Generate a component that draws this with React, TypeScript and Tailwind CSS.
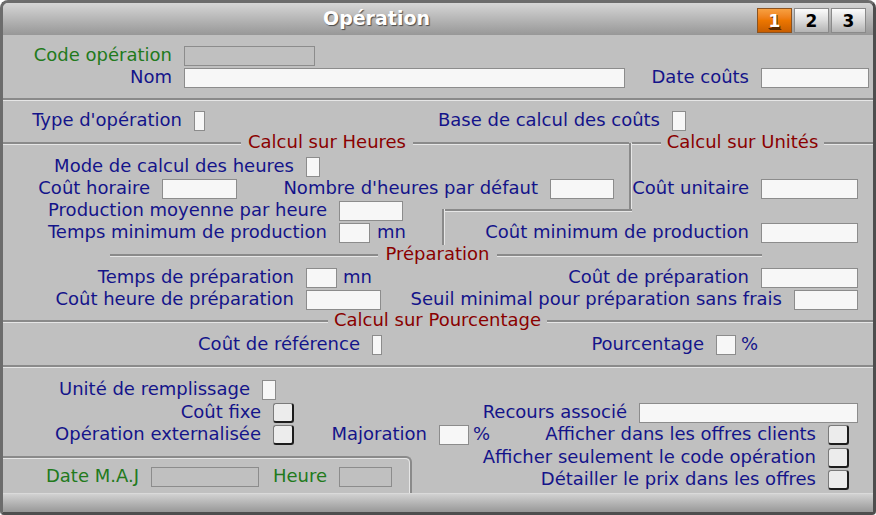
import type { ReactNode } from "react";

const NAVY = "text-[#14148a]";
const GREEN = "text-[#227a1c]";
const MAROON = "text-[#8a0000]";

function Groove({ className = "" }: { className?: string }) {
  return (
    <div
      className={`h-[3px] shrink-0 border-t-2 border-b border-t-[#8a8a8a] border-b-[#e6e6e6] ${className}`}
    />
  );
}

function L({
  className,
  children,
  green,
}: {
  className: string;
  children: ReactNode;
  green?: boolean;
}) {
  return (
    <span
      className={`shrink-0 whitespace-nowrap pb-[2px] text-right leading-[20px] ${green ? GREEN : NAVY} ${className}`}
    >
      {children}
    </span>
  );
}

function Caption({ className, children }: { className: string; children: ReactNode }) {
  return (
    <span className={`shrink-0 pb-[2px] text-center leading-[20px] ${MAROON} ${className}`}>
      {children}
    </span>
  );
}

function Box({ className, disabled }: { className: string; disabled?: boolean }) {
  return (
    <div
      className={`h-[20px] shrink-0 border border-[#8c8c8c] ${
        disabled ? "bg-[#c0c0c0]" : "bg-[#f7f7f7]"
      } ${className}`}
    />
  );
}

function Check() {
  return (
    <div className="ml-[12px] h-[20px] w-[21px] shrink-0 rounded-[3px] border border-[#7a7a7a] border-r-2 border-b-2 border-r-[#1c1c1c] border-b-[#1c1c1c] bg-[#ececec]" />
  );
}

function Tab({ n, active }: { n: string; active?: boolean }) {
  return (
    <div
      className={`flex h-[25px] w-[35px] items-center justify-center border text-[17px] font-bold ${
        active
          ? "border-[#8a5220] bg-linear-to-b from-[#f7a040] via-[#ec7600] to-[#c95e00] text-white underline decoration-[#5a2a00] [text-shadow:1px_1px_0_#5a2a00]"
          : "border-[#8a8a8a] bg-linear-to-b from-[#fcfcfc] via-[#dcdcdc] to-[#b4b4b4] text-black"
      }`}
    >
      {n}
    </div>
  );
}

export default function App() {
  return (
    <div className="h-[515px] w-[876px] overflow-hidden bg-white">
      <div className="flex h-[515px] w-[876px] flex-col overflow-hidden rounded-t-[8px] rounded-b-[4px] border-[3px] border-[#6c6c6c] border-r-[#4e4e4e] border-b-[#4e4e4e] bg-[#c0c0c0] font-['DejaVu_Sans',sans-serif] text-[18px] leading-[22px]">
        {/* barre de titre */}
        <div className="flex h-[32px] shrink-0 bg-linear-to-b from-[#d6d6d6] to-[#979797]">
          <div className="flex w-[747px] items-center justify-center pb-[2px] text-[19px] font-bold text-white [text-shadow:1px_1px_1px_#4a4a4a]">
            Opération
          </div>
          <div className="ml-[7px] mt-[5px] flex gap-[2px]">
            <Tab n="1" active />
            <Tab n="2" />
            <Tab n="3" />
          </div>
        </div>

        {/* corps */}
        <div className="flex h-[458px] shrink-0 flex-col pt-[10px]">
          <div className="flex h-[22px] items-center">
            <L className="w-[169px]" green>
              Code opération
            </L>
            <Box className="ml-[12px] w-[131px]" disabled />
          </div>
          <div className="flex h-[22px] items-center">
            <L className="w-[169px]">Nom</L>
            <Box className="ml-[12px] w-[441px]" />
            <L className="w-[124px]">Date coûts</L>
            <Box className="ml-[12px] w-[108px]" />
          </div>

          <Groove className="my-[9px]" />

          <div className="flex h-[22px] items-center">
            <L className="w-[179px]">Type d'opération</L>
            <Box className="ml-[12px] h-[19px] w-[11px]" />
            <L className="w-[455px]">Base de calcul des coûts</L>
            <Box className="ml-[12px] h-[19px] w-[14px]" />
          </div>

          {/* heures / unités */}
          <div className="relative">
            <div className="flex h-[22px] items-center">
              <Groove className="w-[238px]" />
              <Caption className="w-[172px]">Calcul sur Heures</Caption>
              <Groove className="w-[216px]" />
              <div className="w-[3px] shrink-0" />
              <Groove className="w-[29px]" />
              <Caption className="w-[163px]">Calcul sur Unités</Caption>
              <Groove className="flex-1" />
            </div>
            <div className="mt-[2px] flex h-[22px] items-center">
              <L className="w-[291px]">Mode de calcul des heures</L>
              <Box className="ml-[12px] w-[14px]" />
            </div>
            <div className="flex h-[22px] items-center">
              <L className="w-[147px]">Coût horaire</L>
              <Box className="ml-[12px] w-[75px]" />
              <L className="w-[301px]">Nombre d'heures par défaut</L>
              <Box className="ml-[12px] w-[64px]" />
              <L className="w-[135px]">Coût unitaire</L>
              <Box className="ml-[12px] w-[97px]" />
            </div>
            <div className="flex h-[22px] items-center">
              <L className="w-[324px]">Production moyenne par heure</L>
              <Box className="ml-[12px] w-[64px]" />
            </div>
            <div className="flex h-[22px] items-center">
              <L className="w-[324px]">Temps minimum de production</L>
              <Box className="ml-[12px] w-[31px]" />
              <L className="ml-[7px] w-[36px] !text-left">mn</L>
              <L className="w-[336px]">Coût minimum de production</L>
              <Box className="ml-[12px] w-[97px]" />
            </div>
            <div className="absolute left-[626px] top-[11px] h-[67px] w-[3px] border-l-2 border-r border-l-[#8a8a8a] border-r-[#e6e6e6]" />
            <Groove className="absolute left-[439px] top-[77px] w-[190px]" />
            <div className="absolute left-[439px] top-[77px] h-[36px] w-[3px] border-l-2 border-r border-l-[#8a8a8a] border-r-[#e6e6e6]" />
          </div>

          {/* préparation */}
          <div className="flex h-[22px] items-center">
            <Groove className="ml-[107px] w-[268px]" />
            <Caption className="w-[119px]">Préparation</Caption>
            <Groove className="w-[265px]" />
          </div>
          <div className="mt-[1px] flex h-[22px] items-center">
            <L className="w-[291px]">Temps de préparation</L>
            <Box className="ml-[12px] w-[31px]" />
            <L className="ml-[6px] w-[30px] !text-left">mn</L>
            <L className="w-[376px]">Coût de préparation</L>
            <Box className="ml-[12px] w-[97px]" />
          </div>
          <div className="flex h-[22px] items-center">
            <L className="w-[291px]">Coût heure de préparation</L>
            <Box className="ml-[12px] w-[75px]" />
            <L className="w-[401px]">Seuil minimal pour préparation sans frais</L>
            <Box className="ml-[12px] w-[64px]" />
          </div>

          {/* pourcentage */}
          <div className="flex h-[20px] items-center">
            <Groove className="w-[325px]" />
            <Caption className="w-[219px]">Calcul sur Pourcentage</Caption>
            <Groove className="flex-1" />
          </div>
          <div className="mt-[3px] flex h-[22px] items-center">
            <L className="w-[357px]">Coût de référence</L>
            <Box className="ml-[12px] w-[10px]" />
            <L className="w-[322px]">Pourcentage</L>
            <Box className="ml-[12px] w-[20px]" />
            <L className="ml-[5px] w-[20px] !text-left">%</L>
          </div>

          <Groove className="mt-[9px]" />

          <div className="mt-[10px] flex h-[23px] items-center">
            <L className="w-[247px]">Unité de remplissage</L>
            <Box className="ml-[12px] w-[14px]" />
          </div>
          <div className="flex h-[23px] items-center">
            <L className="w-[258px]">Coût fixe</L>
            <Check />
            <L className="w-[333px]">Recours associé</L>
            <Box className="ml-[12px] w-[219px]" />
          </div>
          <div className="flex h-[22px] items-center">
            <L className="w-[258px]">Opération externalisée</L>
            <Check />
            <L className="w-[133px]">Majoration</L>
            <Box className="ml-[12px] w-[30px]" />
            <L className="ml-[4px] w-[20px] !text-left">%</L>
            <L className="w-[323px]">Afficher dans les offres clients</L>
            <Check />
          </div>

          <div className="flex">
            <div className="mt-[10px] h-[37px] w-[409px] shrink-0 rounded-tr-[6px] border-t-2 border-r-2 border-[#8a8a8a]">
              <div className="h-full rounded-tr-[5px] border-t border-r border-[#e6e6e6] pt-[7px]">
                <div className="flex h-[22px] items-center">
                  <L className="w-[136px]" green>
                    Date M.A.J
                  </L>
                  <Box className="ml-[12px] w-[108px]" disabled />
                  <L className="w-[68px]" green>
                    Heure
                  </L>
                  <Box className="ml-[12px] w-[53px]" disabled />
                </div>
              </div>
            </div>
            <div className="flex flex-col pt-[1px]">
              <div className="flex h-[22px] items-center">
                <L className="w-[404px]">Afficher seulement le code opération</L>
                <Check />
              </div>
              <div className="flex h-[22px] items-center">
                <L className="w-[404px]">Détailler le prix dans les offres</L>
                <Check />
              </div>
            </div>
          </div>
        </div>

        {/* barre du bas */}
        <div className="h-[19px] shrink-0 border-t border-[#dadada] bg-linear-to-b from-[#d2d2d2] to-[#989898]" />
      </div>
    </div>
  );
}
